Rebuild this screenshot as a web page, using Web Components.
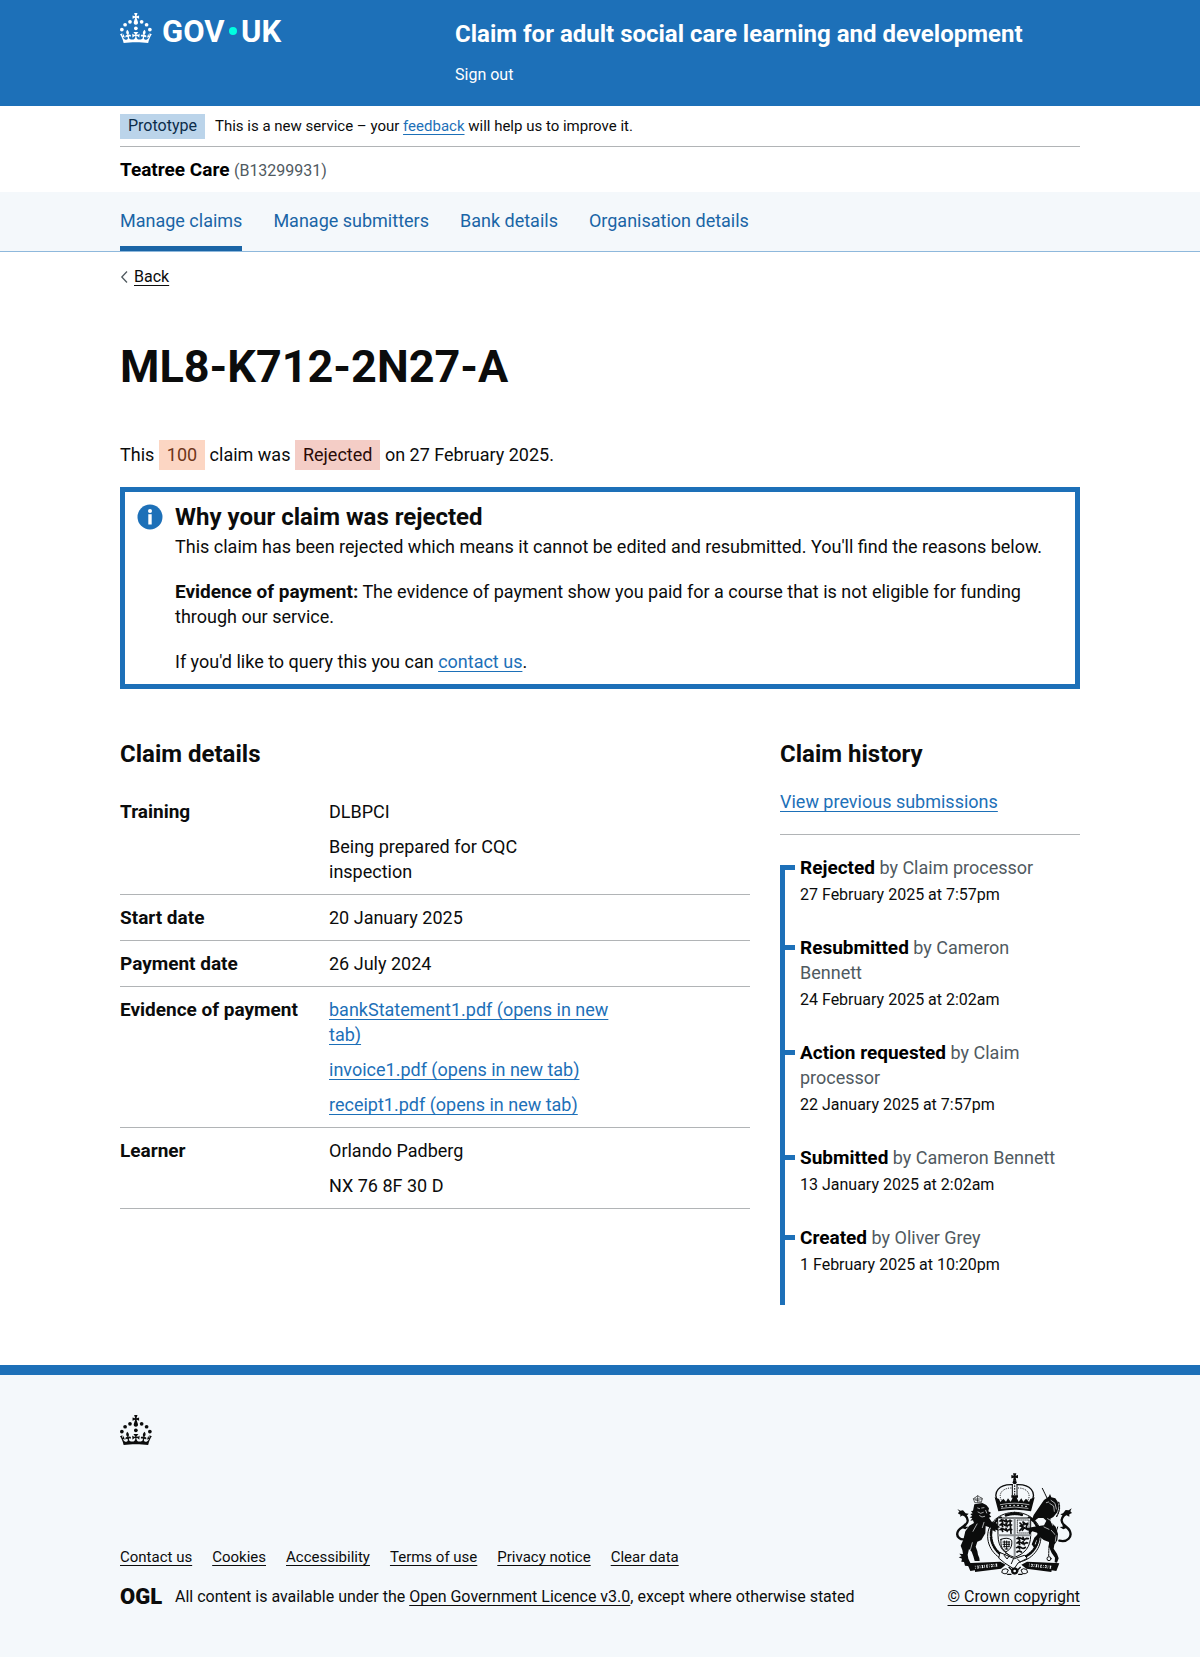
<!DOCTYPE html>
<html lang="en">
<head>
<meta charset="utf-8">
<meta name="viewport" content="width=device-width, initial-scale=1">
<title>ML8-K712-2N27-A – Claim for adult social care learning and development</title>
<style>
  :root {
    --font: Roboto, "Liberation Sans", sans-serif;
    --blue: #1d70b8;
    --nav-blue: #1a65a6;
    --ink: #0b0c0c;
    --grey: #505a5f;
    --rule: #b1b4b6;
    --pale: #f4f8fb;
    --body: 18px;
    --strong: 19px;
    --small: 16px;
    --smaller: 15px;
    --heading: 24px;
    --page: 960px;
  }
  body { margin: 0; background: #fff; color: var(--ink); font: var(--body)/25px var(--font); }
</style>
</head>
<body>
<claim-page></claim-page>

<script>
const base = `
  *, *::before, *::after { box-sizing: border-box; }
  :host { display: block; }
  .wrap { max-width: var(--page); margin: 0 auto; }
  a { color: var(--blue); text-decoration: underline; text-decoration-thickness: 1px; text-underline-offset: 3px; text-decoration-skip-ink: none; }
  h1, h2, h3, p, ul, ol, dl, dd { margin: 0; padding: 0; }
  ul, ol { list-style: none; }
  b { font-size: var(--strong); line-height: 1; }
  svg { display: block; }
`;
function define(name, css, html) {
  const template = document.createElement('template');
  template.innerHTML = `<style>${base}${css}</style>${html}`;
  customElements.define(name, class extends HTMLElement {
    constructor() {
      super();
      this.attachShadow({ mode: 'open' }).append(template.content.cloneNode(true));
    }
  });
}

define('crown-mark', `:host { width: 32px; } svg { fill: currentColor; }`, `
  <svg width="32" height="30" viewBox="0 0 64 60" aria-hidden="true">
    <circle cx="20" cy="17.6" r="3.7"/><circle cx="10.2" cy="23.5" r="3.7"/><circle cx="3.7" cy="33.2" r="3.7"/>
    <circle cx="31.7" cy="30.6" r="3.7"/><circle cx="43.3" cy="17.6" r="3.7"/><circle cx="53.2" cy="23.5" r="3.7"/><circle cx="59.7" cy="33.2" r="3.7"/>
    <path d="M33.1,9.8c.2-.1.3-.3.5-.5l4.6,2.4v-6.8l-4.6,1.5c-.1-.2-.3-.3-.5-.5l1.9-5.9h-6.7l1.9,5.9c-.2.1-.3.3-.5.5l-4.6-1.5v6.8l4.6-2.4c.1.2.3.3.5.5l-2.6,8c-.9,2.8,1.2,5.7,4.1,5.7h0c3,0,5.1-2.9,4.1-5.7l-2.6-8ZM37,37.9s-3.4,3.8-4.1,6.1c2.2,0,4.2-.5,6.4-2.8l-.7,8.5c-2-2.8-4.4-4.1-5.7-3.8.1,3.1.5,6.7,5.8,7.2,3.7.3,6.7-1.5,7-3.8.4-2.6-2-4.3-3.7-1.6-1.4-4.5,2.4-6.1,4.9-3.2-1.9-4.5-1.8-7.7,2.4-10.9,3,4,2.6,7.3-1.2,11.1,2.4-1.3,6.2,0,4,4.6-1.2-2.8-3.7-2.2-4.2.2-.3,1.7.7,3.7,3,4.2,1.9.3,4.7-.9,7-5.9-1.3,0-2.4.7-3.9,1.7l2.4-8c.6,2.3,1.4,3.7,2.2,4.5.6-1.6.5-2.8,0-5.3l5,1.8c-2.6,3.6-5.2,8.7-7.3,17.5-7.4-1.1-15.7-1.7-24.5-1.7h0c-8.8,0-17.1.6-24.5,1.7-2.1-8.9-4.7-13.9-7.3-17.5l5-1.8c-.5,2.5-.6,3.7,0,5.3.8-.8,1.6-2.3,2.2-4.5l2.4,8c-1.5-1-2.6-1.7-3.9-1.7,2.3,5,5.2,6.2,7,5.9,2.3-.4,3.3-2.4,3-4.2-.5-2.4-3-3.1-4.2-.2-2.2-4.6,1.6-6,4-4.6-3.7-3.7-4.2-7.1-1.2-11.1,4.2,3.2,4.3,6.4,2.4,10.9,2.5-2.8,6.3-1.3,4.9,3.2-1.8-2.7-4.1-1-3.7,1.6.3,2.3,3.3,4.1,7,3.8,5.4-.5,5.7-4.2,5.8-7.2-1.3-.2-3.7,1-5.7,3.8l-.7-8.5c2.2,2.3,4.2,2.7,6.4,2.8-.7-2.3-4.1-6.1-4.1-6.1h10.6,0Z"/>
  </svg>`);

define('royal-arms', `:host { width: 120px; }`, `
  <svg width="120" height="105" viewBox="75 40 360 315" aria-hidden="true" fill="none" stroke="#0b0c0c" stroke-linecap="round" stroke-linejoin="round">
    <!-- crown -->
    <path fill="#0b0c0c" stroke="none" d="M252 44h10l-2 7 7-2v10l-7-2 2 9h-10l2-9-7 2v-10l7 2z"/>
    <circle cx="257" cy="71" r="6" fill="#0b0c0c" stroke="none"/>
    <path stroke-width="4" d="M208 132C188 100 212 76 250 78M306 132C326 100 302 76 264 78"/>
    <path stroke-width="3" stroke-dasharray="1 6" d="M217 124C206 103 224 88 246 88M297 124C308 103 290 88 268 88"/>
    <path stroke-width="3" d="M250 78v32M264 78v32"/><path stroke-width="4" stroke-dasharray="1 7" d="M257 82v30"/>
    <path fill="#0b0c0c" stroke="none" d="M197 116l13 5 4 9 9-10 8 9 6-10 8 10 6-12h-4v-7h20v7h-4l6 12 8-10 6 10 8-9 9 10 4-9 13-5-11 42q-49-10-98 0z"/>
    <path stroke="#f4f8fb" stroke-width="2" d="M214 138q43-9 86 0M217 149q40-8 80 0"/>
    <path stroke="#f4f8fb" stroke-width="4" stroke-dasharray="1 11" d="M219 144q38-8 76 0"/>
    <!-- garter -->
    <path fill="#f4f8fb" stroke-width="3" d="M257 161c46 0 79 31 79 72 0 42-35 78-79 78s-81-36-81-78c0-41 35-72 81-72z"/>
    <path stroke-width="8" stroke-dasharray="2 5 5 4 1 6" d="M215 177C191 191 183 213 187 241c4 26 23 47 45 55M300 177c24 14 32 36 28 64-4 26-23 47-45 55M231 170q26-9 52 0"/>
    <!-- shield -->
    <path fill="#f4f8fb" stroke-width="3" d="M207 178h98v52c0 36-19 56-49 66-30-10-49-30-49-66z"/>
    <path stroke="#8d9194" stroke-width="6" d="M257 180v112M209 230h95"/>
    <path stroke-width="5" d="M213 187q8-5 14 0t14-1l7 1M213 199q8-5 14 0t14-1l7 1M213 213q8-5 14 0t14-1l7 1M217 183l4 9M231 183l4 9M217 195l4 9M231 195l4 9M217 209l4 9M231 209l4 9M243 184l3 40"/>
    <rect x="265" y="184" width="35" height="39" stroke-width="2" stroke-dasharray="3 3"/>
    <path stroke-width="5" d="M272 216l10-12-9-2 12-4-3-8 9 7 5-3-4 10 3 9-9-6-6 8M273 193l5 5"/>
    <path stroke-width="3" d="M216 242q20-8 32 3c3 22-8 30-17 34-11-6-17-16-15-37zM222 250h20M222 257h20M224 264h17M228 271h9M226 247v18M233 247v24M240 249v14"/>
    <path stroke-width="5" d="M264 240q8-5 14 0t14-1l6 1M264 253q8-5 14 0t14-1l4 1M263 267q8-5 14 0t12-1M264 280q6-5 13 0M268 236l4 9M282 236l4 9M268 249l4 9M282 249l4 9M268 263l4 8"/>
    <!-- lion -->
    <path stroke-width="2" d="M137 131l-4-11 8-5 5-4 6 4 8 4-3 12zM135 121h24M146 112v18M139 124l15 4"/>
    <path fill="#0b0c0c" stroke="none" d="M136 137l24-4 12 6 8 10-2 9 8 4-5 6 6 6-7 3 8 12 18 6-1 5 9 6-9 2 5 8-11-3 1 7-9-5-4-7-17-6-1 22-12 20-12 5-5 15 5 13 2 11 4 10 1 9-15 0-4-14-5-14-8-8-4 17 2 12 8 17-2 6-16-2-3-11-8-1 2-9-10-4 9-3-7-8 11 1-2-12-5-13 8-18 6-25 12-17 14-8-3-8-8 1 6-7-8-3 8-4-6-6 7-2-5-7 6-1z"/>
    <path stroke="#f4f8fb" stroke-width="2" d="M146 148l6 2M158 148l7-1M147 160l8 4 8-3M152 171l7 4 8-2M170 155l3 8M144 196l-12 22M165 191l-5 16M130 252l-6 22"/>
    <path stroke-width="7" d="M117 238C94 250 78 232 88 216c9-14 30-15 28-31-1-11-11-19-24-22"/>
    <path fill="#0b0c0c" stroke="none" d="M85 151l9 5 8-1 8 9 9 1-7 7-9-3-10 5 2-7-8-3 5-4zM96 207l12-13 2 10 9 0-10 8z"/>
    <!-- unicorn -->
    <path stroke-width="3" stroke-dasharray="4 2" d="M340 89l14 29"/>
    <path fill="#0b0c0c" stroke="none" d="M345 124l14-10 4-8 4 10 12 3 7 10 3 14-4 18-12 14-9 5 2 11 14 13 7 22-2 19-9 13-2 12 10 15 5 14-5 13-7-1 1-14-10-14-8-18 0-15-16-6-10-8-12 9-5 12 8 7-11 2-6-9 8-20 13-13-19-6-10 10 0-11-9-8 16-3 17-3 21-3 7-14-9-8-15 0-12 9-6-7 4-11z"/>
    <path stroke="#f4f8fb" stroke-width="2" d="M352 132l7-2M366 125l12 9 4 17M362 134l12 8 2 16M356 180l10 6 5 14M367 215l14 16-2 17M345 205l15 7"/>
    <path stroke-width="4" stroke-dasharray="4 4" d="M389 131q7 20-6 42"/>
    <path stroke-width="7" d="M391 246C415 252 431 235 422 216c-8-15-26-17-24-32 1-10 8-17 21-22"/>
    <path fill="#0b0c0c" stroke="none" d="M428 149l-9 6-9-1-8 10-8 3 8 4 9-2 10 5 0-7 8-4-5-5zM414 207l-13-12 0 9-9 1 11 7z"/>
    <path stroke-width="3" stroke-dasharray="5 3" d="M386 205l-8 28-18 26-1 33"/>
    <circle cx="360" cy="300" r="6" stroke-width="3"/>
    <!-- buckle, rose and scroll -->
    <path fill="#f4f8fb" stroke-width="3" d="M214 282l42 18 30-10 9 9-28 14-12 18-28-18-17-14z"/>
    <path stroke-width="3" d="M226 289l7-6 8 8-6 9zM253 301l-6 14M266 302l8 8"/>
    <path fill="#0b0c0c" stroke="none" d="M114 314l12-1 88-4 16 9-14 12-78 10 0-5-14 2zM391 314l-10-1-87-4-17 9 15 12 75 10 1-5 14 2z"/>
    <path stroke="#f4f8fb" stroke-width="9" stroke-dasharray="2 4 5 3" stroke-linecap="butt" d="M138 326l68-7M300 319l69 7"/>
    <path stroke="#0b0c0c" stroke-width="3" stroke-dasharray="3 3" stroke-linecap="butt" d="M138 326l68-7M300 319l69 7"/>
    <path fill="#f4f8fb" stroke-width="3" d="M222 332q10-5 16 2l-5 11q-8 2-14-3zM292 332q-10-5-16 2l5 11q8 2 14-3z"/>
    <circle cx="257" cy="337" r="10" fill="#0b0c0c" stroke-width="2"/><circle cx="257" cy="337" r="4" fill="#f4f8fb" stroke="none"/>
    <path stroke-width="4" d="M240 326l8 8M274 326l-8 8M236 347h10M269 347h10"/>
  </svg>`);

define('service-header', `
  :host { background: var(--blue); color: #fff; }
  .wrap { display: flex; min-height: 106px; }
  .logo { flex: 0 0 335px; padding-top: 13px; }
  .logo a, .signout { color: inherit; text-decoration: none; }
  .logo a { display: flex; gap: 10px; }
  .logo svg { overflow: visible; }
  .service { font-weight: 700; font-size: var(--heading); line-height: 30px; padding-top: 19px; }
  .service a { color: inherit; text-decoration: none; }
  .signout { display: inline-block; font-size: var(--small); line-height: 20px; margin-top: 16px; }
`, `
  <header class="wrap">
    <div class="logo"><a href="#" aria-label="GOV.UK">
      <crown-mark></crown-mark>
      <svg width="124" height="40" viewBox="0 0 124 40" fill="#fff" font-family="Roboto, sans-serif" font-weight="700" font-size="31">
        <text x="0" y="29">GOV</text><circle cx="71" cy="18" r="4" fill="#00ffe0"/><text x="79" y="29">UK</text>
      </svg></a></div>
    <div>
      <div class="service"><a href="#">Claim for adult social care learning and development</a></div>
      <a class="signout" href="#">Sign out</a>
    </div>
  </header>`);

define('phase-banner', `
  .wrap { display: flex; align-items: center; gap: 10px; min-height: 41px; border-bottom: 1px solid var(--rule); font-size: var(--smaller); line-height: 20px; }
  strong { font-weight: 400; font-size: var(--small); background: #bbd4ea; color: #0c2d4a; padding: 2px 8px 3px; }
`, `<div class="wrap"><strong>Prototype</strong><span>This is a new service – your <a href="#">feedback</a> will help us to improve it.</span></div>`);

define('org-name', `
  .wrap { padding: 10px 0; color: #000; }
  .id { font-size: var(--small); line-height: 1; color: var(--grey); }
`, `<div class="wrap"><b><slot></slot></b> <span class="id">(<slot name="id"></slot>)</span></div>`);

define('primary-nav', `
  :host { background: var(--pale); border-bottom: 1px solid #8eb8dc; }
  ul { display: flex; gap: 31px; }
  a { display: block; color: var(--nav-blue); text-decoration: none; padding: 16px 0 13px; border-bottom: 5px solid transparent; }
  a[aria-current] { border-color: var(--nav-blue); }
`, `<nav class="wrap" aria-label="Primary"><ul>
    <li><a href="#" aria-current="page">Manage claims</a></li>
    <li><a href="#">Manage submitters</a></li>
    <li><a href="#">Bank details</a></li>
    <li><a href="#">Organisation details</a></li>
  </ul></nav>`);

define('back-link', `
  :host { padding-top: 15px; font-size: var(--small); line-height: 20px; }
  div { display: flex; align-items: center; gap: 5px; }
  a { color: var(--ink); }
`, `<div><svg width="9" height="12" viewBox="0 0 9 12" fill="none" stroke="#505a5f" stroke-width="1.3" aria-hidden="true"><path d="M7 .5L1.8 6 7 11.5"/></svg><a href="#"><slot></slot></a></div>`);

define('status-tag', `
  :host { display: inline-block; padding: 2px 8px 3px; background: #fcd6c3; color: #6e3619; }
  :host([tone="red"]) { background: #f4cdc6; color: #2a0b06; }
`, `<slot></slot>`);

define('info-banner', `
  :host { border: 5px solid var(--blue); padding: 10px 12px; }
  div { display: grid; grid-template-columns: 26px 1fr; column-gap: 12px; row-gap: 2px; }
  svg { margin-top: 2px; }
  h2 { font-size: var(--heading); line-height: 30px; }
  section { display: flex; flex-direction: column; gap: 20px; grid-column: 2; }
`, `<div>
    <svg width="26" height="26" viewBox="0 0 26 26" aria-hidden="true"><circle cx="13" cy="13" r="12.5" fill="#1d70b8"/><circle cx="13" cy="7" r="2" fill="#fff"/><path fill="#fff" d="M11.300 10.200h3.400V20.500h-3.400z"/></svg>
    <h2><slot name="title"></slot></h2>
    <section>
      <p>This claim has been rejected which means it cannot be edited and resubmitted. You'll find the reasons below.</p>
      <p><b>Evidence of payment:</b> The evidence of payment show you paid for a course that is not eligible for funding through our service.</p>
      <p>If you'd like to query this you can <a href="#">contact us</a>.</p>
    </section>
  </div>`);

define('claim-summary', `
  h2 { font-size: var(--heading); line-height: 30px; margin-bottom: 20px; }
  dl > div { display: grid; grid-template-columns: 189px minmax(0, 285px); column-gap: 20px; padding: 10px 0; border-bottom: 1px solid var(--rule); }
  dt { font-weight: 700; font-size: var(--strong); }
  dd { display: grid; gap: 10px; }
`, `<h2>Claim details</h2>
  <dl>
    <div><dt>Training</dt><dd><p>DLBPCI</p><p>Being prepared for CQC<br>inspection</p></dd></div>
    <div><dt>Start date</dt><dd>20 January 2025</dd></div>
    <div><dt>Payment date</dt><dd>26 July 2024</dd></div>
    <div><dt>Evidence of payment</dt><dd><p><a href="#">bankStatement1.pdf (opens in new tab)</a></p><p><a href="#">invoice1.pdf (opens in new tab)</a></p><p><a href="#">receipt1.pdf (opens in new tab)</a></p></dd></div>
    <div><dt>Learner</dt><dd><p>Orlando Padberg</p><p>NX 76 8F 30 D</p></dd></div>
  </dl>`);

define('history-entry', `
  :host {
    padding: 0 12px 30px 20px; color: #000;
    background: linear-gradient(var(--blue), var(--blue)) 0 10px / 15px 5px no-repeat, linear-gradient(var(--blue), var(--blue)) 0 var(--start, 0) / 5px 100% no-repeat;
  }
  .by { color: var(--grey); }
  .when { margin-top: 5px; color: var(--ink); font-size: var(--small); line-height: 20px; }
`, `<p><b><slot name="event"></slot></b> <span class="by">by <slot name="who"></slot></span></p><p class="when"><slot name="when"></slot></p>`);

define('claim-history', `
  h2 { font-size: var(--heading); line-height: 30px; margin-bottom: 20px; }
  .previous { padding-bottom: 20px; border-bottom: 1px solid var(--rule); margin-bottom: 20px; }
  history-entry:first-child { --start: 10px; }
`, `<h2>Claim history</h2>
  <p class="previous"><a href="#">View previous submissions</a></p>
  <div role="list">
    <history-entry role="listitem"><span slot="event">Rejected</span><span slot="who">Claim processor</span><time slot="when">27 February 2025 at 7:57pm</time></history-entry>
    <history-entry role="listitem"><span slot="event">Resubmitted</span><span slot="who">Cameron Bennett</span><time slot="when">24 February 2025 at 2:02am</time></history-entry>
    <history-entry role="listitem"><span slot="event">Action requested</span><span slot="who">Claim processor</span><time slot="when">22 January 2025 at 7:57pm</time></history-entry>
    <history-entry role="listitem"><span slot="event">Submitted</span><span slot="who">Cameron Bennett</span><time slot="when">13 January 2025 at 2:02am</time></history-entry>
    <history-entry role="listitem"><span slot="event">Created</span><span slot="who">Oliver Grey</span><time slot="when">1 February 2025 at 10:20pm</time></history-entry>
  </div>`);

define('service-footer', `
  :host { background: var(--pale); border-top: 10px solid var(--blue); padding: 40px 0 50px; font-size: var(--small); line-height: 20px; }
  a { color: var(--ink); }
  .meta { display: flex; justify-content: space-between; align-items: flex-end; margin-top: 27px; }
  ul { display: flex; gap: 20px; margin-bottom: 20px; font-size: var(--smaller); }
  .licence { display: flex; gap: 12px; }
  .licence svg { overflow: visible; }
  .copy { display: flex; flex-direction: column; align-items: center; gap: 10px; }
`, `<footer class="wrap">
    <crown-mark></crown-mark>
    <div class="meta">
      <div>
        <ul>
          <li><a href="#">Contact us</a></li><li><a href="#">Cookies</a></li><li><a href="#">Accessibility</a></li>
          <li><a href="#">Terms of use</a></li><li><a href="#">Privacy notice</a></li><li><a href="#">Clear data</a></li>
        </ul>
        <div class="licence">
          <svg width="43" height="20" viewBox="0 0 43 20" font-family="Roboto, sans-serif" font-weight="900" font-size="22" fill="#0b0c0c" aria-hidden="true"><text x="0" y="17">OGL</text></svg>
          <span>All content is available under the <a href="#">Open Government Licence v3.0</a>, except where otherwise stated</span>
        </div>
      </div>
      <div class="copy"><royal-arms></royal-arms><a href="#">© Crown copyright</a></div>
    </div>
  </footer>`);

define('claim-page', `
  main { padding-bottom: 60px; }
  h1 { font-size: 45px; line-height: 50px; margin: 55px 0 48px; }
  .status { margin-bottom: 17px; line-height: 30px; }
  .status status-tag { line-height: 25px; }
  .columns { display: grid; grid-template-columns: minmax(0, 21fr) minmax(0, 10fr); gap: 30px; margin-top: 50px; }
`, `<service-header></service-header>
  <phase-banner></phase-banner>
  <org-name>Teatree Care<span slot="id">B13299931</span></org-name>
  <primary-nav></primary-nav>
  <div class="wrap">
    <back-link>Back</back-link>
    <main>
      <h1>ML8-K712-2N27-A</h1>
      <p class="status">This <status-tag>100</status-tag> claim was <status-tag tone="red">Rejected</status-tag> on 27 February 2025.</p>
      <info-banner><span slot="title">Why your claim was rejected</span></info-banner>
      <div class="columns"><claim-summary></claim-summary><claim-history></claim-history></div>
    </main>
  </div>
  <service-footer></service-footer>`);
</script>
</body>
</html>
